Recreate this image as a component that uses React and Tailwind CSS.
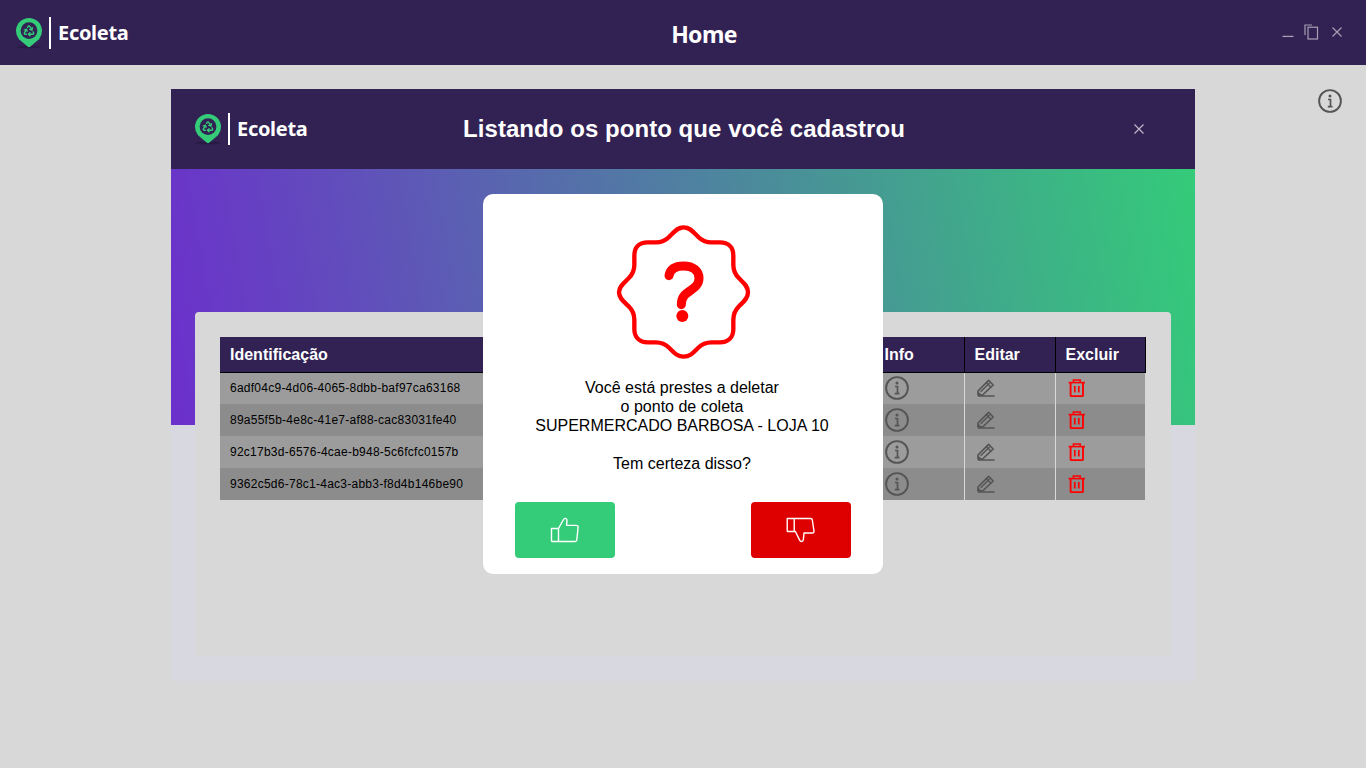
import React from "react";

const rows = [
  "6adf04c9-4d06-4065-8dbb-baf97ca63168",
  "89a55f5b-4e8c-41e7-af88-cac83031fe40",
  "92c17b3d-6576-4cae-b948-5c6fcfc0157b",
  "9362c5d6-78c1-4ac3-abb3-f8d4b146be90",
];

const Pin = () => (
  <svg width="28" height="32" viewBox="0 0 28 32" className="shrink-0">
    <ellipse cx="14" cy="30" rx="12.5" ry="1.3" fill="#291a45" />
    <path d="M12.6 29.6 L4 22.3 A13 13 0 1 1 24 22.3 L15.4 29.6 Q14 30.6 12.6 29.6Z" fill="#34cb79" />
    <circle cx="14" cy="13.6" r="8.4" fill="#322153" />
    <g transform="translate(7.7 7.3) scale(0.525)" fill="none" stroke="#34cb79" strokeWidth="2.6" strokeLinecap="round" strokeLinejoin="round">
      <path d="M7 19H4.815a1.83 1.83 0 0 1-1.57-.881 1.785 1.785 0 0 1-.004-1.784L7.196 9.5" />
      <path d="M11 19h8.203a1.83 1.83 0 0 0 1.556-.89 1.784 1.784 0 0 0 0-1.775l-1.226-2.12" />
      <path d="m14 16-3 3 3 3" />
      <path d="M8.293 13.596 7.196 9.5 3.1 10.598" />
      <path d="m9.344 5.811 1.093-1.892A1.83 1.83 0 0 1 11.985 3a1.784 1.784 0 0 1 1.546.888l3.943 6.843" />
      <path d="m13.378 9.633 4.096 1.098 1.097-4.096" />
    </g>
  </svg>
);

const Logo = () => (
  <div className="flex items-center">
    <Pin />
    <div className="ml-[6px] h-[32px] w-[2px] bg-white" />
    <span className="ml-[7px] font-['Noto_Sans',sans-serif] text-[20px] font-bold leading-none tracking-[-0.3px] text-white">Ecoleta</span>
  </div>
);

const InfoIcon = ({ size = 24, color = "#555555" }) => (
  <svg width={size} height={size} viewBox="0 0 24 24" fill="none" className="shrink-0">
    <circle cx="12" cy="12" r="10.9" stroke={color} strokeWidth="1.9" />
    <circle cx="12" cy="6.9" r="1.5" fill={color} />
    <path d="M10 10.5h2.5v6.8M9.8 17.6h4.7" stroke={color} strokeWidth="1.7" />
  </svg>
);

const EditIcon = () => (
  <svg width="18" height="18" viewBox="0 0 18 18" fill="none" className="ml-[2px]">
    <path d="M1 12 L11.6 1.4 L16.2 6 L5.6 16 L1 16Z" stroke="#555555" strokeWidth="1.7" strokeLinejoin="round" />
    <path d="M3.6 12.8 L12.6 4 M9.2 3.6 L14 8.2" stroke="#555555" strokeWidth="1.4" />
    <path d="M1 12.4 L5 16 L1 16.6Z" fill="#555555" />
    <path d="M1 17 H17.6" stroke="#555555" strokeWidth="1.5" />
  </svg>
);

const TrashIcon = () => (
  <svg width="18" height="18" viewBox="0 0 18 18" fill="none" className="ml-[2px]">
    <path d="M0.6 3.6 H17" stroke="#ff0000" strokeWidth="1.6" />
    <path d="M5.4 3.4 V1 H12.2 V3.4" stroke="#ff0000" strokeWidth="1.5" />
    <path d="M2.6 3.6 V16.2 a0.9 0.9 0 0 0 0.9 0.9 H14.1 a0.9 0.9 0 0 0 0.9 -0.9 V3.6" stroke="#ff0000" strokeWidth="1.9" />
    <path d="M6.8 7 V13.4 M10.8 7 V13.4" stroke="#ff0000" strokeWidth="1.7" />
  </svg>
);

const Badge = () => (
  <svg width="165" height="165" viewBox="0 0 495 495" fill="none">
    <path
      d="M248 52 C228 52 218 68 205 80 C195 90 185 97 165 97 L140 97 C115 97 100 112 100 137 L100 165 C100 185 93 195 83 205 C70 218 54 228 54 247 C54 266 70 276 83 289 C93 299 100 309 100 329 L100 357 C100 382 115 397 140 397 L165 397 C185 397 195 404 205 414 C218 427 228 440 248 440 C268 440 278 427 291 414 C301 404 311 397 331 397 L357 397 C382 397 397 382 397 357 L397 329 C397 309 404 299 414 289 C427 276 441 266 441 247 C441 228 427 218 414 205 C404 195 397 185 397 165 L397 137 C397 112 382 97 357 97 L331 97 C311 97 301 90 291 80 C278 68 268 52 248 52Z"
      stroke="#ff0000"
      strokeWidth="13"
    />
    <path d="M204 197 C208 175 226 168 248 168 C276 168 294 182 294 205 C294 232 266 240 251 255 C243 264 241 272 241 284" stroke="#ff0000" strokeWidth="27" strokeLinecap="round" />
    <circle cx="244" cy="318" r="18" fill="#ff0000" />
  </svg>
);

const ThumbUp = () => (
  <svg width="30" height="26" viewBox="0 0 30 26" fill="none" stroke="#ffffff" strokeWidth="1.4" strokeLinejoin="round">
    <path d="M1.5 11.5 H8.5 V24.5 H2.5 a1 1 0 0 1 -1 -1Z" />
    <path d="M8.5 11.5 L13.5 2.5 C14.5 0.6 16.7 1.2 17 3.2 L16.6 8.4 H26.5 C27.6 8.4 28.2 9.2 28.1 10.2 L26.8 23 C26.7 24 26 24.5 25 24.5 H8.5" />
  </svg>
);

const ThumbDown = () => (
  <svg width="30" height="26" viewBox="0 0 30 26" fill="none" stroke="#ffffff" strokeWidth="1.4" strokeLinejoin="round">
    <path d="M1.2 1.5 H8.2 V14.5 H2.2 a1 1 0 0 1 -1 -1Z" />
    <path d="M8.2 1.5 H24.6 C25.6 1.5 26.2 2 26.3 3 L28 14 C28.1 15.2 27.4 16 26.4 16 H18 L17.4 22.5 C17.2 24.6 14.8 25.2 13.8 23.4 L9.4 14.5 H8.2" />
  </svg>
);

const Th = ({ children }) => (
  <th className="h-[35px] border-b border-r border-black pl-[10px] pt-px text-left align-middle text-[16px] font-bold tracking-normal text-white">
    {children}
  </th>
);

export default function App() {
  return (
    <div className="min-h-screen bg-[#d8d8d8] font-['Liberation_Sans',Arial,sans-serif]">
      <header className="flex h-[65px] items-center bg-[#322153]">
        <div className="w-[171px] pl-[15px]">
          <Logo />
        </div>
        <h1 className="flex-1 pt-[3px] text-center font-['Noto_Sans',sans-serif] text-[23px] font-bold leading-none tracking-[-0.6px] text-white">Home</h1>
        <div className="mb-[2px] flex w-[129px] items-center justify-end gap-[10px] pr-[23px]">
          <svg width="12" height="16" viewBox="0 0 12 16" fill="none" stroke="#a5a0b2" strokeWidth="1.3">
            <path d="M0.5 12.4 H11.5" />
          </svg>
          <svg width="15" height="16" viewBox="0 0 15 16" fill="none" stroke="#a5a0b2" strokeWidth="1.2" className="mr-[2px]">
            <path d="M1 11 V1 H8" />
            <rect x="4" y="3.2" width="9.5" height="11.8" />
          </svg>
          <svg width="12" height="16" viewBox="0 0 12 16" fill="none" stroke="#a5a0b2" strokeWidth="1.2">
            <path d="M1.5 3.5 L10.5 12.5 M10.5 3.5 L1.5 12.5" />
          </svg>
        </div>
      </header>

      <main className="flex items-start pl-[171px] pt-[24px]">
        <section className="w-[1024px] bg-[#d7d8e0] pb-[25px]">
          <div className="flex h-[80px] items-center bg-[#322153] pl-[23px]">
            <div className="w-[269px]">
              <Logo />
            </div>
            <h2 className="w-[442px] whitespace-nowrap text-center text-[24px] font-bold leading-none tracking-[0.05px] text-white">Listando os ponto que você cadastrou</h2>
            <svg width="12" height="12" viewBox="0 0 12 12" fill="none" stroke="#bdb8c8" strokeWidth="1.2" className="ml-[228px]">
              <path d="M1.5 1.5 L10.5 10.5 M10.5 1.5 L1.5 10.5" />
            </svg>
          </div>
          <div className="h-[256px] bg-[linear-gradient(80deg,#6c2fcc,#34cb79)]" />
          <div className="relative mx-[24px] -mt-[113px] h-[344px] rounded-[4px] bg-[#d8d8d8] pl-[25px] pt-[25px]">
            <table className="w-[925px] table-fixed border-collapse text-[12px] tracking-[0.25px] text-black">
              <colgroup>
                <col className="w-[329px]" />
                <col className="w-[325px]" />
                <col className="w-[90px]" />
                <col className="w-[91px]" />
                <col className="w-[90px]" />
              </colgroup>
              <thead>
                <tr className="bg-[#322153]">
                  <Th>Identificação</Th>
                  <Th>Nome</Th>
                  <Th>Info</Th>
                  <Th>Editar</Th>
                  <Th>Excluir</Th>
                </tr>
              </thead>
              <tbody>
                {rows.map((id, i) => (
                  <tr key={id} className={i % 2 === 0 ? "h-[32px] bg-[#9c9c9c]" : "h-[32px] bg-[#8c8c8c]"}>
                    <td className="pl-[10px] align-middle">{id}</td>
                    <td />
                    <td className="border-r border-[#d8d8d8] pl-[11px] align-middle">
                      <InfoIcon />
                    </td>
                    <td className="border-r border-[#d8d8d8] pl-[10px] align-middle">
                      <EditIcon />
                    </td>
                    <td className="pl-[10px] align-middle">
                      <TrashIcon />
                    </td>
                  </tr>
                ))}
              </tbody>
            </table>
          </div>
        </section>
        <div className="ml-[123px]">
          <InfoIcon />
        </div>
      </main>

      {/* confirm dialog */}
      <div className="absolute left-[483px] top-[194px] flex h-[380px] w-[400px] flex-col items-center rounded-[10px] bg-white px-[32px] pb-[16px] pt-[16px]">
        <Badge />
        <p className="mr-[2px] mt-[3px] whitespace-nowrap text-center text-[16px] leading-[19px] text-black">
          Você está prestes a deletar
          <br />o ponto de coleta
          <br />SUPERMERCADO BARBOSA - LOJA 10
          <br />
          <br />Tem certeza disso?
        </p>
        <div className="mt-auto flex w-full justify-between">
          <button className="flex h-[56px] w-[100px] items-center justify-center rounded-[4px] bg-[#34cb79]">
            <ThumbUp />
          </button>
          <button className="flex h-[56px] w-[100px] items-center justify-center rounded-[4px] bg-[#de0000]">
            <ThumbDown />
          </button>
        </div>
      </div>
    </div>
  );
}
